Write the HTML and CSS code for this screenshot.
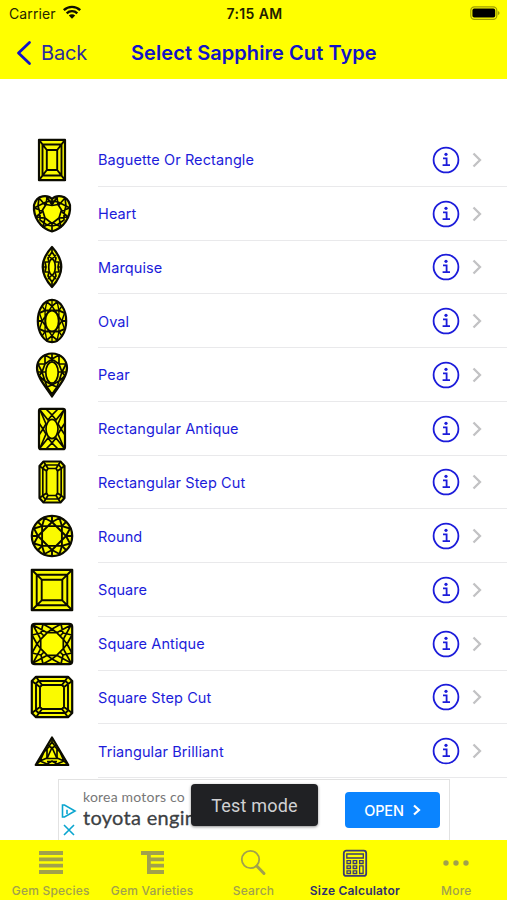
FILE: index.html
```html
<!DOCTYPE html>
<html lang="en">
<head>
<meta charset="utf-8">
<title>Select Sapphire Cut Type</title>
<link rel="stylesheet" href="styles.css">
</head>
<body>
<svg class="defs" width="0" height="0">
  <defs>
    <g id="facets" fill="none">
      <path d="M14 0L0 14L-14 0L0-14ZM9.9 9.9H-9.9V-9.9H9.9Z"/>
      <path d="M14 0L18 7.5L9.9 9.9L7.5 18L0 14L-7.5 18L-9.9 9.9L-18 7.5L-14 0L-18-7.5L-9.9-9.9L-7.5-18L0-14L7.5-18L9.9-9.9L18-7.5Z"/>
      <path d="M14 0H20M-14 0H-20M0 14V20M0-14V-20M9.9 9.9L14 14M-9.9 9.9L-14 14M9.9-9.9L14-14M-9.9-9.9L-14-14"/>
    </g>
    <g id="info">
      <circle cx="14" cy="14" r="12.4"/>
      <path d="M11 12.4H14.6V19.2M10.6 19.2H18"/>
      <circle class="dot" cx="14" cy="8.3" r="1.6"/>
    </g>
    <path id="chev" d="M1.5 1.5L8 8L1.5 14.5"/>
  </defs>
</svg>
<div class="screen">
  <header class="header">
    <div class="status">
      <div class="carrier"><span>Carrier</span>
        <svg width="20" height="15" viewBox="0 0 20 15"><path d="M1.8 5.2A11.8 11.8 0 0 1 18.2 5.2M4.7 8.3A7.6 7.6 0 0 1 15.3 8.3" fill="none" stroke="#111100" stroke-width="2.4"/><path d="M6.8 10.6A4.6 4.6 0 0 1 13.2 10.6L10 13.8Z" fill="#111100"/></svg>
      </div>
      <div class="time">7:15 AM</div>
      <svg class="battery" width="31" height="15" viewBox="0 0 31 15"><rect x="1.8" y=".8" width="26" height="12.6" rx="3.6" fill="none" stroke="#a0a000" stroke-width="1.2"/><rect x="3.4" y="2.6" width="22.8" height="9" rx="1.8" fill="#000"/><path d="M28.8 5Q30.6 5.6 30.6 7.1T28.8 9.2Z" fill="#a0a000"/></svg>
    </div>
    <div class="nav">
      <div class="back"><svg width="16" height="26" viewBox="0 0 16 26"><path d="M13.5 2.5L2.5 13L13.5 23.5" fill="none" stroke="#1212c8" stroke-width="2.8" stroke-linecap="round" stroke-linejoin="round"/></svg><span>Back</span></div>
      <h1>Select Sapphire Cut Type</h1>
    </div>
  </header>
  <main class="list">
    <div class="row"><svg class="gem" viewBox="-22 -22 44 44"><path d="M-13-20.2H13V20.2H-13Z"/><path d="M-9.5-15.5H9.5V15.5H-9.5ZM-5.2-10H5.2V10H-5.2ZM-13-20.2L-5.2-10M13-20.2L5.2-10M-13 20.2L-5.2 10M13 20.2L5.2 10"/></svg><div class="cell"><span>Baguette Or Rectangle</span><svg class="info"><use href="#info"/></svg><svg class="chev"><use href="#chev"/></svg></div></div>
    <div class="row"><svg class="gem" viewBox="-22 -22 44 44"><path d="M0-15C4-19 15-20 18-9C19 3 12 14 0 17.5C-12 14-19 3-18-9C-15-20-4-19 0-15Z"/><path class="fine" d="M0-15V-9L5-17L6-8L13-16L14-8L18-6L9-3L16 3L7 4L9 13L0 8.5L-9 13L-7 4L-16 3L-9-3L-18-6L-14-8L-13-16L-6-8L-5-17L0-9M0 8.5V17M0-13L6-12L14-8L12-1L12 6L5 11L0 12L-5 11L-12 6L-12-1L-14-8L-6-12Z"/><path class="table" d="M0-8.5L6-9.5L9.5-4L7 4L0 9.5L-7 4L-9.5-4L-6-9.5Z"/></svg><div class="cell"><span>Heart</span><svg class="info"><use href="#info"/></svg><svg class="chev"><use href="#chev"/></svg></div></div>
    <div class="row"><svg class="gem" viewBox="-22 -22 44 44"><path d="M0-20Q18.5 0 0 20Q-18.5 0 0-20Z"/><path class="fine" d="M0-20V-15M0 15V20M0-15L4-9L3-5L7-5L6 0L7 5L3 5L4 9L0 15L-4 9L-3 5L-7 5L-6 0L-7-5L-3-5L-4-9ZM0-8L4-12M0-8L-4-12M0 8L4 12M0 8L-4 12M6 0H9M-6 0H-9"/><ellipse class="table" rx="3.3" ry="7.8"/></svg><div class="cell"><span>Marquise</span><svg class="info"><use href="#info"/></svg><svg class="chev"><use href="#chev"/></svg></div></div>
    <div class="row"><svg class="gem" viewBox="-22 -22 44 44"><ellipse rx="14.2" ry="21.2"/><use href="#facets" transform="scale(.7 1.06)"/><ellipse class="table" rx="6.6" ry="10.4"/></svg><div class="cell"><span>Oval</span><svg class="info"><use href="#info"/></svg><svg class="chev"><use href="#chev"/></svg></div></div>
    <div class="row"><svg class="gem" viewBox="-22 -22 44 44"><path d="M0-21.5C9-21.5 15-15 15-7C15 3 5 13 0 21.5C-5 13-15 3-15-7C-15-15-9-21.5 0-21.5Z"/><path class="fine" d="M0-16L7-20L7-11L14-11L10-3L13 1L7 6L5 12L0 10L-5 12L-7 6L-13 1L-10-3L-14-11L-7-11L-7-20ZM0-21V-16L-7-11L-10-3L-7 6L0 10L7 6L10-3L7-11L0-16M5.5-3H14M-5.5-3H-14M-5 12L0 19L5 12"/><ellipse class="table" cy="-2.5" rx="6.2" ry="10.6"/></svg><div class="cell"><span>Pear</span><svg class="info"><use href="#info"/></svg><svg class="chev"><use href="#chev"/></svg></div></div>
    <div class="row"><svg class="gem" viewBox="-22 -22 44 44"><rect x="-13" y="-20.2" width="26" height="40.4" rx="2"/><path class="fine" d="M-12-19L-4-9L0-14L4-9L12-19M-12 19L-4 9L0 14L4 9L12 19M-12-19L-6-5L-9 0L-6 5L-12 19M12-19L6-5L9 0L6 5L12 19M-6-20L0-14L6-20M-6 20L0 14L6 20M-13-6L-9 0L-13 6M13-6L9 0L13 6"/><ellipse class="table" rx="6" ry="9.6"/></svg><div class="cell"><span>Rectangular Antique</span><svg class="info"><use href="#info"/></svg><svg class="chev"><use href="#chev"/></svg></div></div>
    <div class="row"><svg class="gem" viewBox="-22 -22 44 44"><path d="M-8.5-20.5H8.5L12.5-16V16L8.5 20.5H-8.5L-12.5 16V-16Z"/><path class="fine" d="M-7-17H7L9.2-14V14L7 17H-7L-9.2 14V-14ZM-4-13.5H4L5.5-11V11L4 13.5H-4L-5.5 11V-11ZM-8.5-20.5L-4-13.5M-12.5-16L-5.5-11M8.5-20.5L4-13.5M12.5-16L5.5-11M-8.5 20.5L-4 13.5M-12.5 16L-5.5 11M8.5 20.5L4 13.5M12.5 16L5.5 11"/></svg><div class="cell"><span>Rectangular Step Cut</span><svg class="info"><use href="#info"/></svg><svg class="chev"><use href="#chev"/></svg></div></div>
    <div class="row"><svg class="gem" viewBox="-22 -22 44 44"><circle r="20.2"/><use href="#facets"/></svg><div class="cell"><span>Round</span><svg class="info"><use href="#info"/></svg><svg class="chev"><use href="#chev"/></svg></div></div>
    <div class="row"><svg class="gem" viewBox="-22 -22 44 44"><path d="M-20.2-20.2H20.2V20.2H-20.2Z"/><path d="M-15.3-15.3H15.3V15.3H-15.3ZM-10.3-10.3H10.3V10.3H-10.3ZM-20-20L-10.3-10.3M20-20L10.3-10.3M-20 20L-10.3 10.3M20 20L10.3 10.3"/></svg><div class="cell"><span>Square</span><svg class="info"><use href="#info"/></svg><svg class="chev"><use href="#chev"/></svg></div></div>
    <div class="row"><svg class="gem" viewBox="-22 -22 44 44"><rect x="-20.2" y="-20.2" width="40.4" height="40.4" rx="3"/><path class="fine" d="M-19-19L-4.7-11.3L0-15L4.7-11.3L19-19L11.3-4.7L15 0L11.3 4.7L19 19L4.7 11.3L0 15L-4.7 11.3L-19 19L-11.3 4.7L-15 0L-11.3-4.7ZM-9-20L0-15L9-20M-9 20L0 15L9 20M-20-9L-15 0L-20 9M20-9L15 0L20 9M-9-20L-11-11L-20-9M9-20L11-11L20-9M-9 20L-11 11L-20 9M9 20L11 11L20 9M-11-11L-8-8M11-11L8-8M-11 11L-8 8M11 11L8 8"/><path class="table" d="M4.7-11.3L11.3-4.7V4.7L4.7 11.3H-4.7L-11.3 4.7V-4.7L-4.7-11.3Z"/></svg><div class="cell"><span>Square Antique</span><svg class="info"><use href="#info"/></svg><svg class="chev"><use href="#chev"/></svg></div></div>
    <div class="row"><svg class="gem" viewBox="-22 -22 44 44"><path d="M-16-20.2H16L20.2-16V16L16 20.2H-16L-20.2 16V-16Z"/><path d="M-13.5-16H13.5L16-13.5V13.5L13.5 16H-13.5L-16 13.5V-13.5ZM-10-12H10L12-10V10L10 12H-10L-12 10V-10ZM-16-20.2L-10-12M-20.2-16L-12-10M16-20.2L10-12M20.2-16L12-10M-16 20.2L-10 12M-20.2 16L-12 10M16 20.2L10 12M20.2 16L12 10"/></svg><div class="cell"><span>Square Step Cut</span><svg class="info"><use href="#info"/></svg><svg class="chev"><use href="#chev"/></svg></div></div>
    <div class="row"><svg class="gem" viewBox="-22 -22 44 44"><path d="M0-13.5L16.3 14H-16.3Z"/><path class="fine" d="M0-13V-9L5-2L5 7L12 10L5 13L0 10L-5 13L-12 10L-5 7L-5-2L0-9M0-3L5-6M0-3L-5-6M-16 14L-12 10L-8 1L-5-2M16 14L12 10L8 1L5-2M-5 10.5H5"/><path class="table" d="M0-3.5L5 7.5H-5Z"/></svg><div class="cell"><span>Triangular Brilliant</span><svg class="info"><use href="#info"/></svg><svg class="chev"><use href="#chev"/></svg></div></div>
  </main>
  <section class="ad">
    <div class="marks">
      <svg width="16" height="16" viewBox="0 0 16 16"><path d="M1.5 2V14H3.5L14 8L3.5 2ZM6 6.8V11" /></svg>
      <svg width="16" height="14" viewBox="0 0 16 14"><path d="M3 2L13 12M13 2L3 12"/></svg>
    </div>
    <div class="copy"><div class="brand">korea motors co</div><div class="product">toyota engin</div></div>
    <div class="open"><span>OPEN</span><svg width="9" height="12" viewBox="0 0 9 12"><path d="M2 1.5L7 6L2 10.5" fill="none" stroke="#fff" stroke-width="2.2"/></svg></div>
    <div class="toast">Test mode</div>
  </section>
  <footer class="tabs">
    <div class="tab"><svg width="26" height="28" viewBox="0 0 26 28"><path d="M1 4H25M1 10.3H25M1 16.6H25M1 23H25" stroke="#a1a14c" stroke-width="3.8"/></svg><span>Gem Species</span></div>
    <div class="tab"><svg width="26" height="28" viewBox="0 0 26 28"><path d="M2 4H25M9 10.3H25M9 16.6H25M8 23H25M9.9 3V25" fill="none" stroke="#a1a14c" stroke-width="3.8"/></svg><span>Gem Varieties</span></div>
    <div class="tab"><svg width="28" height="28" viewBox="0 0 28 28"><circle cx="11.5" cy="10.5" r="8.7" fill="none" stroke="#a1a14c" stroke-width="1.8"/><path d="M17.8 17L25 24.5" stroke="#a1a14c" stroke-width="3" stroke-linecap="round"/></svg><span>Search</span></div>
    <div class="tab active"><svg width="26" height="30" viewBox="0 0 26 30" fill="none" stroke="#393974"><rect x="1.8" y="2.7" width="22.4" height="25.2" rx="2.5" stroke-width="1.8"/><path stroke-width="1.3" d="M4.8 6H21.3V10H4.8ZM5 12.7H8.5V15.5H5ZM11.2 12.7H14.7V15.5H11.2ZM17.6 12.7H21.1V15.5H17.6ZM5 17.8H8.5V20.5H5ZM11.2 17.8H14.7V20.5H11.2ZM5 22.8H8.5V25.5H5ZM11.2 22.8H14.7V25.5H11.2ZM17.6 17.8H21.1V25.5H17.6Z"/></svg><span>Size Calculator</span></div>
    <div class="tab"><svg width="28" height="28" viewBox="0 0 28 28" fill="#a1a14c"><circle cx="4" cy="14" r="2.7"/><circle cx="14" cy="14" r="2.7"/><circle cx="24" cy="14" r="2.7"/></svg><span>More</span></div>
  </footer>
</div>
</body>
</html>
```
FILE: styles.css
```css
* { box-sizing: border-box; }
body { margin: 0; background: #fff; font-family: Inter, "Liberation Sans", sans-serif; }
.defs { position: absolute; }
.screen { width: 507px; height: 900px; overflow: hidden; display: flex; flex-direction: column; }
svg { display: block; flex: none; }
.header { height: 79px; flex: none; background: #ff0; }
.status { height: 27px; display: grid; grid-template-columns: 1fr auto 1fr; align-items: center; padding: 0 7px 0 9px; font-size: 14px; color: #262600; }
.carrier { display: flex; align-items: center; gap: 6px; letter-spacing: .1px; }
.carrier svg { margin-top: -3px; }
.time { font-weight: 600; font-size: 14px; letter-spacing: .4px; color: #222200; }
.battery { justify-self: end; }
.nav { height: 51px; display: grid; grid-template-columns: 131px auto 1fr; align-items: center; color: #1212c8; }
.back { display: flex; align-items: center; gap: 9px; padding-left: 16px; font-size: 20px; letter-spacing: -.2px; color: #2a2aa0; }
h1 { margin: 0; font-size: 20px; font-weight: 600; white-space: nowrap; letter-spacing: .07px; }

.list { padding-top: 54px; flex: none; }
.row { display: flex; align-items: center; height: 53.75px; padding-left: 30px; }
.gem { width: 44px; height: 44px; margin-right: 24px; fill: none; stroke: #0b0b00; stroke-width: 1.9; stroke-linejoin: round; overflow: visible; }
.gem > :first-child { fill: #fafa00; stroke-width: 2.2; }
.gem .fine { stroke-width: 1.7; }
.gem .table { fill: #ff0; stroke-width: 1.7; }
.cell { flex: 1; height: 100%; display: flex; align-items: center; border-bottom: 1.5px solid #e9e9eb; padding: 1px 25px 0 0; font-size: 14.5px; letter-spacing: .1px; color: #1c1cda; }
.cell span { flex: 1; white-space: nowrap; }
.info { width: 28px; height: 28px; margin-right: 12px; fill: none; stroke: #1c1cda; stroke-width: 1.8; }
.dot { fill: #1c1cda; stroke: none; }
.chev { width: 10px; height: 16px; fill: none; stroke: #c2c2c4; stroke-width: 2.3; }

.ad { position: relative; width: 392px; height: 61px; flex: none; margin: 1px 0 0 58px; border: 1px solid #e2e2e2; border-bottom: 0; display: flex; align-items: center; background: #fff; }
.marks { width: 24px; padding: 20px 0 0 2px; display: flex; flex-direction: column; gap: 4px; fill: none; stroke: #0aa5cf; stroke-width: 1.6; }
.copy { flex: 1; white-space: nowrap; padding-bottom: 4px; }
.brand { font-family: Lato, sans-serif; font-size: 14px; line-height: 17px; letter-spacing: .2px; color: #777; }
.product { font-family: Lato, sans-serif; font-size: 20px; line-height: 24px; letter-spacing: .3px; color: #3c4043; -webkit-text-stroke: .3px #3c4043; width: 118px; overflow: hidden; }
.open { width: 95px; height: 36px; margin-right: 9px; background: #0a84ff; border-radius: 4px; color: #fff; font-size: 14.5px; font-weight: 500; letter-spacing: -.1px; display: flex; align-items: center; justify-content: center; gap: 8px; }
.toast { position: absolute; left: 132px; top: 4px; width: 127px; height: 42px; border-radius: 4px; background: #202124; color: #d0d1d3; font-family: Roboto, sans-serif; font-size: 18px; letter-spacing: .2px; display: flex; align-items: center; justify-content: center; box-shadow: 0 1px 3px rgba(0,0,0,.45); }

.tabs { height: 60px; flex: none; background: #ff0; display: grid; grid-template-columns: repeat(5, 1fr); padding-top: 8px; }
.tab { display: flex; flex-direction: column; align-items: center; color: #a1a14c; font-size: 12px; font-weight: 500; white-space: nowrap; }
.tab svg { height: 30px; }
.tab span { margin-top: 5px; line-height: 16px; letter-spacing: .2px; }
.tab.active { color: #303070; font-weight: 600; }
```
